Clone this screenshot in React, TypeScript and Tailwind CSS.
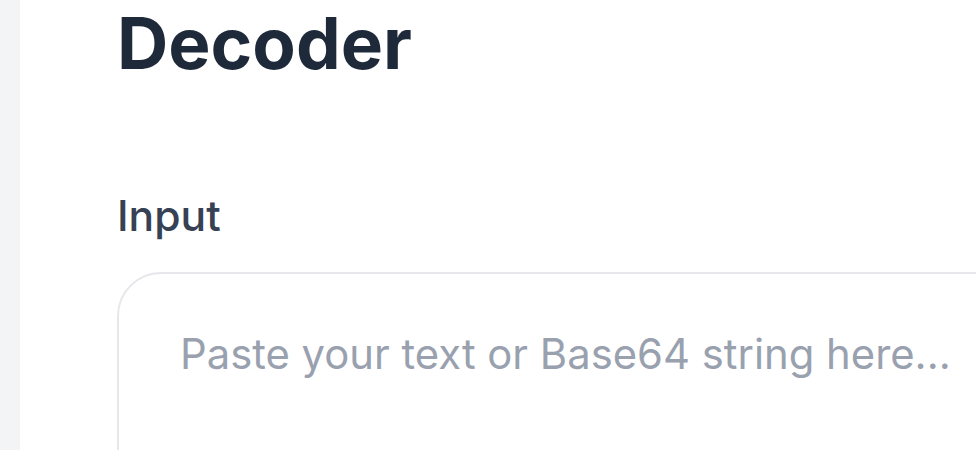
export default function App() {
  return (
    <div className="flex h-[450px] w-[976px] overflow-hidden bg-white font-['Inter',sans-serif]">

      {/* Sidebar strip */}
      <aside className="w-[20px] shrink-0 bg-gray-100" />

      {/* Content */}
      <main className="flex flex-col pl-[97px]">
        <h1 className="text-[71px] leading-[86px] font-bold text-gray-800">
          Decoder
        </h1>

        <label className="mt-[102px] text-[42.6px] leading-[56px] font-medium text-gray-700">
          Input
        </label>

        <textarea
          className="mt-[28px] h-[320px] w-[920px] shrink-0 resize-none rounded-[44px] border-2 border-gray-200 pt-[50px] pl-[61px] text-[41.8px] leading-[61.5px] text-gray-800 placeholder:text-gray-400 outline-none"
          placeholder="Paste your text or Base64 string here..."
        />
      </main>
    </div>
  );
}
